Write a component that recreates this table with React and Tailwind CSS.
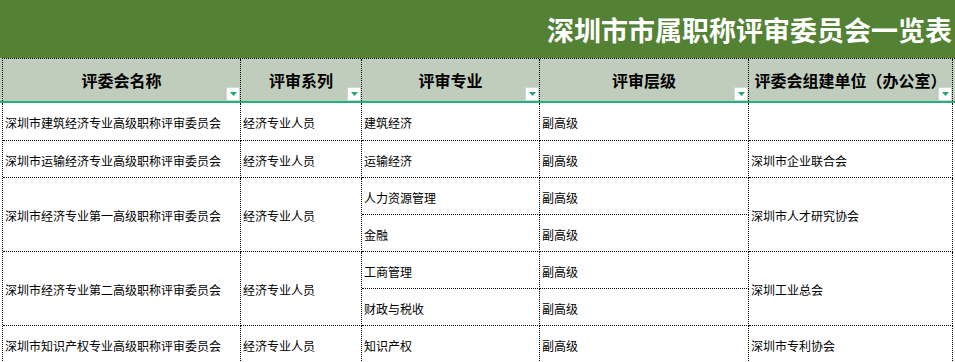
import React from "react";

const headers = ["评委会名称", "评审系列", "评审专业", "评审层级", "评委会组建单位（办公室）"];
const widths = ["w-[238px]", "w-[121px]", "w-[178px]", "w-[209px]", "w-[204px]"];

// body cells: [column, row start, row span, text]
const cells = [
  [1, 1, 1, "深圳市建筑经济专业高级职称评审委员会"],
  [2, 1, 1, "经济专业人员"],
  [3, 1, 1, "建筑经济"],
  [4, 1, 1, "副高级"],
  [5, 1, 1, ""],
  [1, 2, 1, "深圳市运输经济专业高级职称评审委员会"],
  [2, 2, 1, "经济专业人员"],
  [3, 2, 1, "运输经济"],
  [4, 2, 1, "副高级"],
  [5, 2, 1, "深圳市企业联合会"],
  [1, 3, 2, "深圳市经济专业第一高级职称评审委员会"],
  [2, 3, 2, "经济专业人员"],
  [3, 3, 1, "人力资源管理"],
  [4, 3, 1, "副高级"],
  [5, 3, 2, "深圳市人才研究协会"],
  [3, 4, 1, "金融"],
  [4, 4, 1, "副高级"],
  [1, 5, 2, "深圳市经济专业第二高级职称评审委员会"],
  [2, 5, 2, "经济专业人员"],
  [3, 5, 1, "工商管理"],
  [4, 5, 1, "副高级"],
  [5, 5, 2, "深圳工业总会"],
  [3, 6, 1, "财政与税收"],
  [4, 6, 1, "副高级"],
  [1, 7, 1, "深圳市知识产权专业高级职称评审委员会"],
  [2, 7, 1, "经济专业人员"],
  [3, 7, 1, "知识产权"],
  [4, 7, 1, "副高级"],
  [5, 7, 1, "深圳市专利协会"],
];

const colClass = {
  1: "col-start-1",
  2: "col-start-2",
  3: "col-start-3",
  4: "col-start-4",
  5: "col-start-5",
};
const rowClass = {
  1: "row-start-1",
  2: "row-start-2",
  3: "row-start-3",
  4: "row-start-4",
  5: "row-start-5",
  6: "row-start-6",
  7: "row-start-7",
};

function FilterButton() {
  return (
    <div className="absolute right-0 bottom-0 w-[14px] h-[14px] bg-white border border-[#d4d4d4] flex items-center justify-center">
      <svg width="7" height="4" viewBox="0 0 7 4">
        <path d="M0 0 H7 L3.5 4 Z" fill="#21a470" />
      </svg>
    </div>
  );
}

export default function App() {
  return (
    <div className="w-[955px] h-[362px] overflow-hidden bg-white font-['Noto_Sans_CJK_SC','Noto_Sans',sans-serif] text-black">
      <div className="h-[58px] bg-[#548235] flex items-center justify-end pr-[3px]">
        <h1 className="text-white font-bold text-[27px] leading-none">深圳市市属职称评审委员会一览表</h1>
      </div>

      <div className="h-[45px] bg-[#c0ccbc] border-b-2 border-[#22b07d]">
        <div className="ml-[2px] h-full flex border-l border-t border-dotted border-black">
          {headers.map((h, i) => (
            <div
              key={i}
              className={`${widths[i]} relative h-full shrink-0 flex items-center justify-center border-r border-dotted border-black text-[16px] font-bold leading-none`}
            >
              {h}
              <FilterButton />
            </div>
          ))}
        </div>
      </div>

      <div className="ml-[2px] grid grid-cols-[238px_121px_178px_209px_204px] grid-rows-[38px_37px_37px_37px_37px_37px_37px] border-l border-dotted border-black">
        {cells.map(([c, r, span, text], i) => (
          <div
            key={i}
            className={`${colClass[c]} ${rowClass[r]} ${span === 2 ? "row-span-2" : "row-span-1"} flex items-center pl-[2px] pt-[3px] text-[12px] leading-none border-r border-b border-dotted border-black whitespace-nowrap overflow-hidden`}
          >
            {text}
          </div>
        ))}
      </div>
    </div>
  );
}
